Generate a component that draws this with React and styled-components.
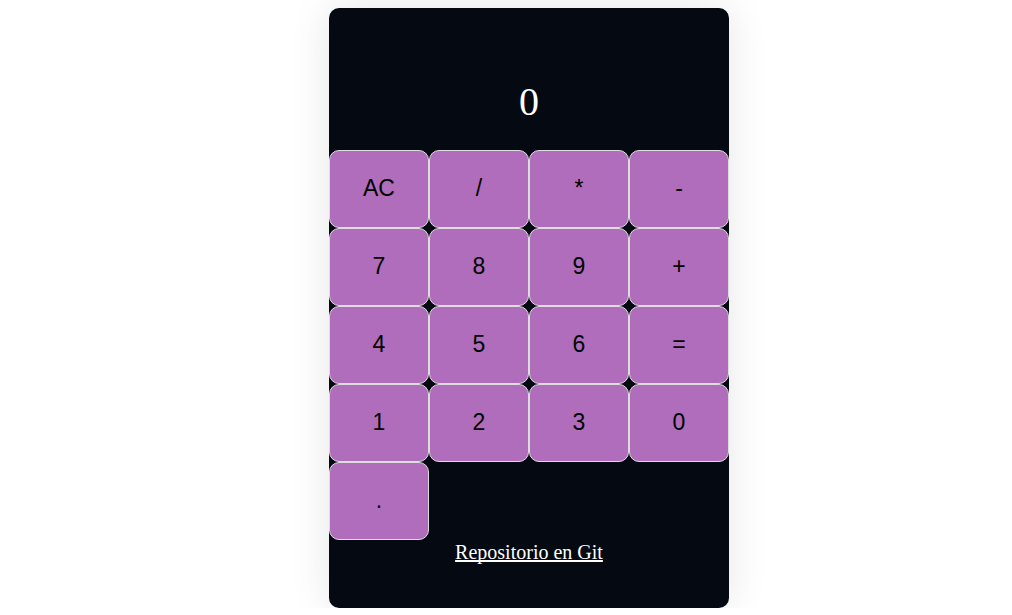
import React, { useState } from "react";
import styled, { createGlobalStyle } from "styled-components";

const GlobalStyle = createGlobalStyle`
  *, *::before, *::after {
    box-sizing: border-box;
  }
  body {
    margin: 0;
    background: #ffffff;
    font-family: "Liberation Serif", "Times New Roman", serif;
  }
`;

const Page = styled.main`
  display: flex;
  justify-content: center;
  padding: 8px 0 0 46px;
`;

const Card = styled.section`
  display: flex;
  flex-direction: column;
  width: 100%;
  max-width: 400px;
  padding-bottom: 44px;
  border-radius: 10px;
  background: #050a12;
  color: #ffffff;
  box-shadow: 0 0 40px rgba(0, 0, 0, 0.1);
`;

const Display = styled.output`
  padding: 70px 16px 24px;
  font-size: 40px;
  line-height: 48px;
  text-align: center;
  overflow-wrap: anywhere;
`;

const Keypad = styled.div`
  display: grid;
  grid-template-columns: repeat(4, 1fr);
`;

const Key = styled.button`
  padding: 24px 0 26px;
  border: 1px solid #dddddd;
  border-radius: 10px;
  background: #b06dbc;
  color: #000000;
  font-family: "Liberation Sans", Arial, sans-serif;
  font-size: 23px;
  line-height: 26px;
  cursor: pointer;
`;

const RepoLink = styled.a`
  align-self: center;
  color: #ffffff;
  font-size: 20px;
  line-height: 24px;
  text-decoration: underline;
  text-decoration-thickness: 2px;
  text-decoration-skip-ink: none;
`;

const KEYS = [
  "AC", "/", "*", "-",
  "7", "8", "9", "+",
  "4", "5", "6", "=",
  "1", "2", "3", "0",
  ".",
];

const OPERATIONS = {
  "+": (a, b) => a + b,
  "-": (a, b) => a - b,
  "*": (a, b) => a * b,
  "/": (a, b) => a / b,
};

const INITIAL = { value: "0", stored: null, operator: null, fresh: true };

function press(state, key) {
  if (key === "AC") return INITIAL;
  if (key in OPERATIONS || key === "=") {
    const current = Number(state.value);
    const result =
      state.operator && !state.fresh
        ? OPERATIONS[state.operator](state.stored, current)
        : current;
    return {
      value: String(result),
      stored: result,
      operator: key === "=" ? null : key,
      fresh: true,
    };
  }
  if (state.fresh) {
    return { ...state, value: key === "." ? "0." : key, fresh: false };
  }
  if (key === "." && state.value.includes(".")) return state;
  return { ...state, value: state.value === "0" && key !== "." ? key : state.value + key };
}

export default function App() {
  const [state, setState] = useState(INITIAL);

  return (
    <>
      <GlobalStyle />
      <Page>
        <Card>
          <Display>{state.value}</Display>
          <Keypad>
            {KEYS.map((key) => (
              <Key
                key={key}
                type="button"
                onClick={() => setState((previous) => press(previous, key))}
              >
                {key}
              </Key>
            ))}
          </Keypad>
          <RepoLink href="#repositorio">Repositorio en Git</RepoLink>
        </Card>
      </Page>
    </>
  );
}
